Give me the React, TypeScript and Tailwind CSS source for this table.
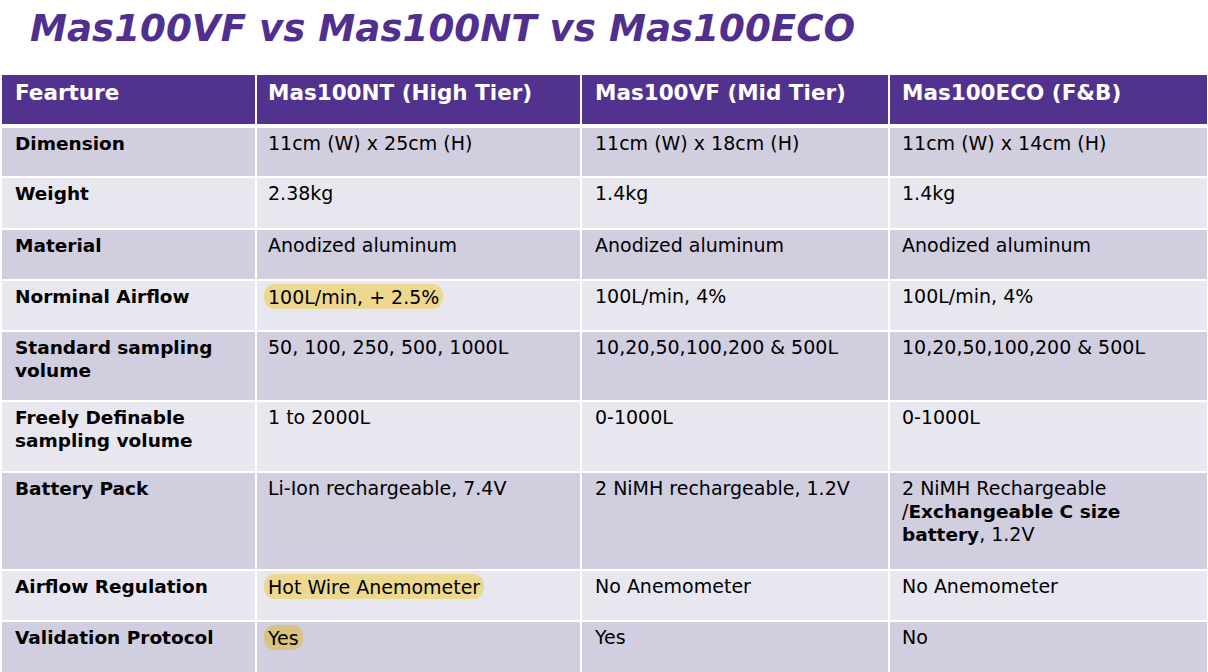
import type { ReactNode } from 'react'

type Row = {
  feature: ReactNode
  nt: ReactNode
  vf: ReactNode
  eco: ReactNode
  h: string
  dark: boolean
}

function Mark({ children, tone = 'light' }: { children: ReactNode; tone?: 'light' | 'dark' }) {
  return (
    <span
      className={
        tone === 'dark'
          ? '-mx-[4px] rounded-[11px] bg-[#d8c381] px-[4px] py-[1.5px]'
          : '-mx-[4px] rounded-[11px] bg-[#ecd88f] px-[4px] py-[1.5px]'
      }
    >
      {children}
    </span>
  )
}

const rows: Row[] = [
  { feature: 'Dimension', nt: '11cm (W) x 25cm (H)', vf: '11cm (W) x 18cm (H)', eco: '11cm (W) x 14cm (H)', h: 'h-[48px]', dark: true },
  { feature: 'Weight', nt: '2.38kg', vf: '1.4kg', eco: '1.4kg', h: 'h-[50px]', dark: false },
  { feature: 'Material', nt: 'Anodized aluminum', vf: 'Anodized aluminum', eco: 'Anodized aluminum', h: 'h-[49px]', dark: true },
  { feature: 'Norminal Airflow', nt: <Mark>100L/min, + 2.5%</Mark>, vf: '100L/min, 4%', eco: '100L/min, 4%', h: 'h-[49px]', dark: false },
  {
    feature: <>Standard sampling<br />volume</>,
    nt: '50, 100, 250, 500, 1000L',
    vf: '10,20,50,100,200 & 500L',
    eco: '10,20,50,100,200 & 500L',
    h: 'h-[68px]',
    dark: true,
  },
  {
    feature: <>Freely Definable<br />sampling volume</>,
    nt: '1 to 2000L',
    vf: '0-1000L',
    eco: '0-1000L',
    h: 'h-[69px]',
    dark: false,
  },
  {
    feature: 'Battery Pack',
    nt: 'Li-Ion rechargeable, 7.4V',
    vf: '2 NiMH rechargeable, 1.2V',
    eco: (
      <>
        2 NiMH Rechargeable
        <br />/<b className="text-[18.5px] font-bold">Exchangeable C size</b>
        <br /><b className="text-[18.5px] font-bold">battery</b>, 1.2V
      </>
    ),
    h: 'h-[96px]',
    dark: true,
  },
  { feature: 'Airflow Regulation', nt: <Mark>Hot Wire Anemometer</Mark>, vf: 'No Anemometer', eco: 'No Anemometer', h: 'h-[49px]', dark: false },
  { feature: 'Validation Protocol', nt: <Mark tone="dark">Yes</Mark>, vf: 'Yes', eco: 'No', h: 'h-[50px]', dark: true },
]

const cols = 'grid grid-cols-[253px_323px_306px_317px] gap-x-[2px]'

export default function App() {
  return (
    <div className="h-[672px] w-[1208px] overflow-hidden bg-white font-['DejaVu_Sans',sans-serif] text-black">
      <h1 className="h-[75px] pl-[30px] pt-[6px] text-[37.2px] font-bold italic leading-[44px] text-[#512f8f]">
        Mas100VF vs Mas100NT vs Mas100ECO
      </h1>

      <div className="ml-[2px] flex flex-col gap-y-[2px]">
        <div className={`${cols} mb-[2px] h-[49px] text-[21.5px] font-bold leading-[25px] text-white`}>
          <div className="bg-[#51338f] pl-[13px] pt-[5px]">Fearture</div>
          <div className="bg-[#51338f] pl-[11px] pt-[5px]">Mas100NT (High Tier)</div>
          <div className="bg-[#51338f] pl-[13px] pt-[5px]">Mas100VF (Mid Tier)</div>
          <div className="bg-[#51338f] pl-[12px] pt-[5px]">Mas100ECO (F&amp;B)</div>
        </div>

        {rows.map((row, i) => {
          const bg = row.dark ? 'bg-[#d0cedf]' : 'bg-[#e8e7ef]'
          return (
            <div key={i} className={`${cols} ${row.h} text-[19px] leading-[23px]`}>
              <div className={`${bg} pl-[13px] pt-[4px] text-[18.5px] font-bold`}>{row.feature}</div>
              <div className={`${bg} pl-[11px] pt-[4px]`}>{row.nt}</div>
              <div className={`${bg} pl-[13px] pt-[4px]`}>{row.vf}</div>
              <div className={`${bg} pl-[12px] pt-[4px]`}>{row.eco}</div>
            </div>
          )
        })}
      </div>
    </div>
  )
}
